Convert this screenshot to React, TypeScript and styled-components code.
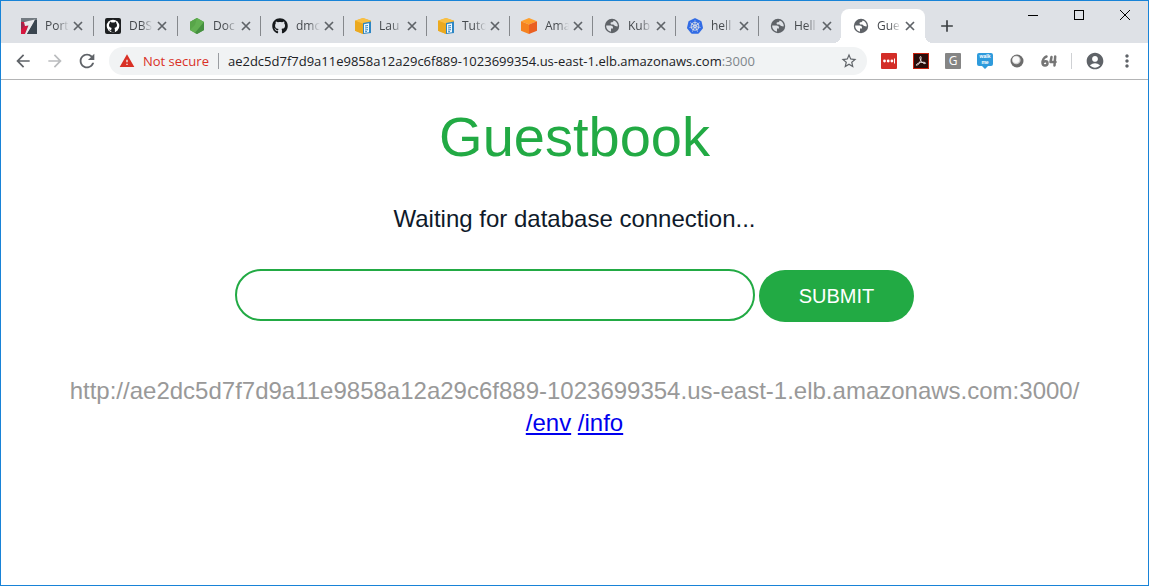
import React from 'react';
import styled, { createGlobalStyle, css } from 'styled-components';
import {
  MdAccountCircle,
  MdAdd,
  MdArrowBack,
  MdArrowForward,
  MdMoreVert,
  MdRefresh,
  MdStarBorder,
  MdWarning,
} from 'react-icons/md';
import { FaGithub } from 'react-icons/fa';
import { SiKubernetes } from 'react-icons/si';

const GlobalStyle = createGlobalStyle`
  *, *::before, *::after { box-sizing: border-box; }
  body { margin: 0; background: #fff; }
  button, input { font: inherit; color: inherit; margin: 0; }
  svg { display: block; flex: none; }
`;

const uiFont = "'Open Sans', 'Noto Sans', sans-serif";
const pageFont = "'Liberation Sans', Arial, sans-serif";
const green = '#22aa44';

const Window = styled.div`
  display: flex;
  flex-direction: column;
  min-height: 100vh;
  border: 1px solid #1883d7;
  background: #fff;
  font-family: ${uiFont};
`;

const TabStrip = styled.div`
  display: flex;
  align-items: flex-end;
  height: 42px;
  padding-left: 8px;
  background: #dee1e6;
`;

const TabItem = styled.div<{ $active?: boolean }>`
  position: relative;
  display: flex;
  align-items: center;
  width: 83px;
  height: 34px;
  padding-left: 12px;
  &:nth-child(-n + 2) {
    width: 84px;
  }
  ${({ $active }) =>
    $active
      ? css`
          width: 84px;
          background: #fff;
          border-radius: 8px 8px 0 0;
          &::before,
          &::after {
            content: '';
            position: absolute;
            bottom: 0;
            width: 8px;
            height: 8px;
          }
          &::before {
            right: 100%;
            background: radial-gradient(circle at 0 0, transparent 8px, #fff 8px);
          }
          &::after {
            left: 100%;
            background: radial-gradient(circle at 100% 0, transparent 8px, #fff 8px);
          }
        `
      : css`
          & + &::before {
            content: '';
            position: absolute;
            left: 0;
            top: 7px;
            width: 1px;
            height: 20px;
            background: #85888c;
          }
        `}
`;

const TabTitle = styled.span`
  width: 26px;
  margin-left: 8px;
  white-space: nowrap;
  font-size: 12px;
  line-height: 16px;
  color: #45494d;
  mask-image: linear-gradient(to right, #000 12px, transparent 24px);
`;

const IconButton = styled.button<{ $size: number; $color?: string }>`
  display: flex;
  align-items: center;
  justify-content: center;
  flex: none;
  width: ${({ $size }) => $size}px;
  height: ${({ $size }) => $size}px;
  padding: 0;
  border: 0;
  background: none;
  color: ${({ $color }) => $color ?? '#5f6368'};
`;

const NewTab = styled(IconButton)`
  margin: 0 0 3px 8px;
`;

const MenuButton = styled(IconButton)`
  margin-left: 12px;
`;

const WindowControls = styled.div`
  display: flex;
  align-self: flex-start;
  margin-left: auto;
`;

const WindowButton = styled.button`
  display: flex;
  align-items: center;
  justify-content: center;
  width: 46px;
  height: 28px;
  padding: 0;
  border: 0;
  background: none;
`;

const Toolbar = styled.div`
  display: flex;
  align-items: center;
  height: 37px;
  padding: 0 11px 0 12px;
  border-bottom: 1px solid #b3b4b5;
  background: #fff;
`;

const NavButtons = styled.div`
  display: flex;
  gap: 12px;
`;

const AddressBar = styled.div`
  display: flex;
  align-items: center;
  flex: 1;
  min-width: 0;
  height: 28px;
  margin-left: 12px;
  padding: 0 8px 0 10px;
  border-radius: 14px;
  background: #f1f3f4;
  font-size: 13px;
  line-height: 20px;
`;

const NotSecure = styled.span`
  margin-left: 8px;
  padding-right: 9px;
  white-space: nowrap;
  color: #d93025;
`;

const AddressDivider = styled.span`
  width: 1px;
  height: 16px;
  background: #9a9da1;
`;

const Address = styled.div`
  flex: 1;
  min-width: 0;
  padding-left: 9px;
  overflow: hidden;
  white-space: nowrap;
  color: #202124;
`;

const Port = styled.span`
  color: #80868b;
`;

const Extensions = styled.div`
  display: flex;
  align-items: center;
  gap: 16px;
  margin-left: 14px;
`;

const GreyBadge = styled.span`
  width: 16px;
  height: 16px;
  border-radius: 1px;
  background: #858585;
  color: #fff;
  font-size: 12px;
  line-height: 16px;
  text-align: center;
`;

const ToolbarDivider = styled.span`
  width: 1px;
  height: 16px;
  margin: 0 13px 0 14px;
  background: #cfd1d4;
`;

const Page = styled.main`
  padding: 25px 16px;
  text-align: center;
  font-family: ${pageFont};
  font-size: 24px;
  line-height: 32px;
  color: #0f1a2a;
`;

const Title = styled.h1`
  margin: 0;
  font-size: 56px;
  font-weight: 400;
  line-height: 64px;
  color: ${green};
`;

const Status = styled.p`
  margin: 34px 0;
`;

const EntryForm = styled.form`
  display: flex;
  justify-content: center;
  align-items: baseline;
  gap: 4px;
`;

const EntryInput = styled.input`
  width: 520px;
  min-width: 0;
  height: 52px;
  padding: 0 24px;
  border: 2px solid ${green};
  border-radius: 26px;
  background: #fff;
  outline: 0;
`;

const SubmitButton = styled.button`
  height: 52px;
  padding: 0 40px;
  border: 0;
  border-radius: 26px;
  background: ${green};
  color: #fff;
  font-size: 20px;
  line-height: 24px;
`;

const HostAddress = styled.p`
  margin: 53px 0 0;
  color: #999;
  overflow-wrap: anywhere;
`;

const PageLink = styled.a`
  color: #0000ee;
`;

const CloseIcon = () => (
  <svg width="10" height="10" viewBox="0 0 10 10" stroke="currentColor" strokeWidth="1.700">
    <path d="M1 1l8 8M9 1L1 9" />
  </svg>
);

const PortalIcon = () => (
  <svg width="16" height="16" viewBox="0 0 16 16">
    <rect width="16" height="16" fill="#46525c" />
    <path d="M0 0h16v2L0 4z" fill="#737b82" />
    <path d="M0 4h5l2 5-3 7H0z" fill="#d5173f" />
    <path d="M0 4l4 3-4 5z" fill="#97284d" />
    <path d="M3 4l11-2.500-1.500 4L6 16H4l3.500-8.500-3.500.5z" fill="#e9e9ec" />
    <path d="M14 2l2 0v14H6z" fill="#3a454f" />
  </svg>
);

const GithubTileIcon = () => (
  <svg width="16" height="16" viewBox="0 0 16 16">
    <rect width="16" height="16" rx="2" fill="#1d1f21" />
    <circle cx="8" cy="8" r="6.3" fill="#fff" />
    <path
      d="M5 3.6l1.7.9h2.6l1.7-.9.3 1.7c.7.8.8 1.5.7 2.3-.2 1.5-1.2 2.1-2.6 2.3.5.5.5 1 .5 1.7v2.4H6.3v-1.2c-1.2.2-1.7-.2-2.3-1.3.8 0 1 .8 2.2.6 0-.9 0-1.6.5-2.2C5.200 9.700 4.200 9.100 4 7.600c-.1-.8 0-1.500.7-2.300z"
      fill="#1d1f21"
    />
  </svg>
);

const NodeIcon = () => (
  <svg width="16" height="16" viewBox="0 0 16 16">
    <path d="M8 0l7 4v8l-7 4-7-4V4z" fill="#55a046" />
    <path d="M8 0l7 4-9 10.900L1 12V4z" fill="#62b052" />
    <path d="M8 0L1 4v8l5-5z" fill="#58a549" />
    <path d="M15 4v8l-7 4-2-1z" fill="#459040" />
  </svg>
);

const AwsDocIcon = () => (
  <svg width="16" height="16" viewBox="0 0 16 16">
    <path d="M8 0l8 2.700v10L8 16l-8-3.300v-10z" fill="#f3b02c" />
    <path d="M8 0l8 2.700-8 3-8-3z" fill="#f9c044" />
    <path d="M8 5.700V16l-8-3.300v-10z" fill="#eba91f" />
    <path d="M8 5l8-1.500v11.500l-8 1z" fill="#2d86c4" />
    <path d="M9 6.200l5-1v9L9 15z" fill="#f2f8fc" />
    <path d="M10 8l3-.5M10 10l3-.4M10 12l3-.3M10 13.800l2-.2" stroke="#2d86c4" strokeWidth="1" />
  </svg>
);

const AwsCubeIcon = () => (
  <svg width="16" height="16" viewBox="0 0 16 16">
    <path d="M8 0l8 3.200L8 6.500 0 3.200z" fill="#ff9e2c" />
    <path d="M0 3.200l8 3.300V16l-8-3.300z" fill="#f58220" />
    <path d="M16 3.200L8 6.500V16l8-3.300z" fill="#ea5f20" />
  </svg>
);

const GlobeIcon = () => (
  <svg width="16" height="16" viewBox="0 0 16 16">
    <path
      fillRule="evenodd"
      fill="#5f6368"
      d="M8 .8a7.200 7.200 0 100 14.400A7.200 7.200 0 008 .8zM2.200 7.600h4.300c1.500 0 2.500.8 2.500 2.200v.7H7v3.200c-2.800-.4-4.900-2.900-4.800-6.100zM9.600 2.400c2.600.8 4.300 3.100 4.200 5.900-1.200.3-1.500-.3-2.500-.3-1.100 0-1-1.600-2.300-1.600H7.300c-1-.3-1-1.900.1-2.100 1.300-.2 2.200-.6 2.200-1.900z"
    />
  </svg>
);

const KubernetesIcon = () => <SiKubernetes size={16} color="#326ce5" />;
const GithubIcon = () => <FaGithub size={16} color="#15181b" />;

const PasswordIcon = () => (
  <svg width="16" height="16" viewBox="0 0 16 16">
    <rect width="16" height="16" rx="1" fill="#d32d27" />
    <g fill="#fff">
      <circle cx="3.500" cy="8" r="1.400" />
      <circle cx="7.200" cy="8" r="1.400" />
      <circle cx="10.900" cy="8" r="1.400" />
      <rect x="13" y="5.500" width="1" height="5" />
    </g>
  </svg>
);

const AcrobatIcon = () => (
  <svg width="16" height="16" viewBox="0 0 16 16">
    <rect x=".5" y=".5" width="15" height="15" fill="#2a0d0b" stroke="#c8200d" />
    <path
      d="M7.300 3.500c1.200-.5 1 2.300.2 4.200-.9 2.100-2.700 4.900-3.900 4.700-1.200-.4.800-2.300 3.900-2.900 2.600-.5 5.200-.3 5.100.7-.2 1.100-2.600.1-4-1.500C7.300 7.200 6.300 4 7.300 3.500z"
      fill="none"
      stroke="#e8e0df"
      strokeWidth="1"
    />
  </svg>
);

const WalkIcon = () => (
  <svg width="16" height="16" viewBox="0 0 16 16" fontFamily="Liberation Sans, sans-serif" fontSize="5" fontWeight="700">
    <path d="M2 0h12a2 2 0 012 2v9a2 2 0 01-2 2h-3l-3 3-3-3H2a2 2 0 01-2-2V2a2 2 0 012-2z" fill="#2f9bdc" />
    <text x="8" y="5" textAnchor="middle" fill="#fff">walk</text>
    <text x="8" y="11" textAnchor="middle" fill="#fff">me</text>
  </svg>
);

const RingIcon = () => (
  <svg width="16" height="16" viewBox="0 0 16 16">
    <circle cx="8" cy="8" r="6.500" fill="#6c6c6c" />
    <circle cx="7.300" cy="7" r="4.300" fill="#cfcfcf" />
    <circle cx="7" cy="6.700" r="3.300" fill="#fafafa" />
  </svg>
);

const SixtyFourIcon = () => (
  <svg width="16" height="16" viewBox="0 0 16 16" fill="none" stroke="#757575" strokeWidth="2.500" strokeLinecap="round" strokeLinejoin="round">
    <path d="M5.500 3.500C3 4.500 1.300 7.500 1.500 10c.2 3.500 5 3 5 .2C6.500 7.800 3 7.800 2 9.800" />
    <path d="M10.500 4L9.500 9h5M14.200 3.500l-.7 9" />
  </svg>
);

const tabs = [
  { title: 'Port', Icon: PortalIcon },
  { title: 'DBS', Icon: GithubTileIcon },
  { title: 'Doc', Icon: NodeIcon },
  { title: 'dmc', Icon: GithubIcon },
  { title: 'Lau', Icon: AwsDocIcon },
  { title: 'Tuto', Icon: AwsDocIcon },
  { title: 'Ama', Icon: AwsCubeIcon },
  { title: 'Kub', Icon: GlobeIcon },
  { title: 'hell', Icon: KubernetesIcon },
  { title: 'Hell', Icon: GlobeIcon },
  { title: 'Gue', Icon: GlobeIcon, active: true },
];

const host = 'ae2dc5d7f7d9a11e9858a12a29c6f889-1023699354.us-east-1.elb.amazonaws.com';

export default function App() {
  return (
    <>
      <GlobalStyle />
      <Window>
        <TabStrip>
          {tabs.map(({ title, Icon, active }) => (
            <TabItem key={title} $active={active}>
              <Icon />
              <TabTitle>{title}</TabTitle>
              <IconButton $size={14} aria-label={`Close ${title}`}>
                <CloseIcon />
              </IconButton>
            </TabItem>
          ))}
          <NewTab $size={28} $color="#3c4043" aria-label="New tab">
            <MdAdd size={20} />
          </NewTab>
          <WindowControls>
            <WindowButton aria-label="Minimize">
              <svg width="10" height="10" viewBox="0 0 10 10" stroke="#000">
                <path d="M0 5.500h10" />
              </svg>
            </WindowButton>
            <WindowButton aria-label="Maximize">
              <svg width="10" height="10" viewBox="0 0 10 10" stroke="#000" fill="none">
                <rect x=".5" y=".5" width="9" height="9" />
              </svg>
            </WindowButton>
            <WindowButton aria-label="Close window">
              <svg width="10" height="10" viewBox="0 0 10 10" stroke="#000">
                <path d="M0 0l10 10M10 0L0 10" />
              </svg>
            </WindowButton>
          </WindowControls>
        </TabStrip>
        <Toolbar>
          <NavButtons>
            <IconButton $size={20} aria-label="Back">
              <MdArrowBack size={20} />
            </IconButton>
            <IconButton $size={20} $color="#babcbe" aria-label="Forward">
              <MdArrowForward size={20} />
            </IconButton>
            <IconButton $size={20} aria-label="Reload">
              <MdRefresh size={22} />
            </IconButton>
          </NavButtons>
          <AddressBar>
            <MdWarning size={16} color="#d93025" />
            <NotSecure>Not secure</NotSecure>
            <AddressDivider />
            <Address>
              {host}
              <Port>:3000</Port>
            </Address>
            <IconButton $size={20} aria-label="Bookmark this page">
              <MdStarBorder size={18} />
            </IconButton>
          </AddressBar>
          <Extensions>
            <PasswordIcon />
            <AcrobatIcon />
            <GreyBadge>G</GreyBadge>
            <WalkIcon />
            <RingIcon />
            <SixtyFourIcon />
          </Extensions>
          <ToolbarDivider />
          <IconButton $size={20} aria-label="Profile">
            <MdAccountCircle size={20} />
          </IconButton>
          <MenuButton $size={20} aria-label="Menu">
            <MdMoreVert size={20} />
          </MenuButton>
        </Toolbar>
        <Page>
          <Title>Guestbook</Title>
          <Status>Waiting for database connection...</Status>
          <EntryForm onSubmit={(e: React.FormEvent) => e.preventDefault()}>
            <EntryInput type="text" aria-label="Guestbook entry" />
            <SubmitButton type="submit">SUBMIT</SubmitButton>
          </EntryForm>
          <HostAddress>http://{host}:3000/</HostAddress>
          <PageLink href="/env">/env</PageLink> <PageLink href="/info">/info</PageLink>
        </Page>
      </Window>
    </>
  );
}
